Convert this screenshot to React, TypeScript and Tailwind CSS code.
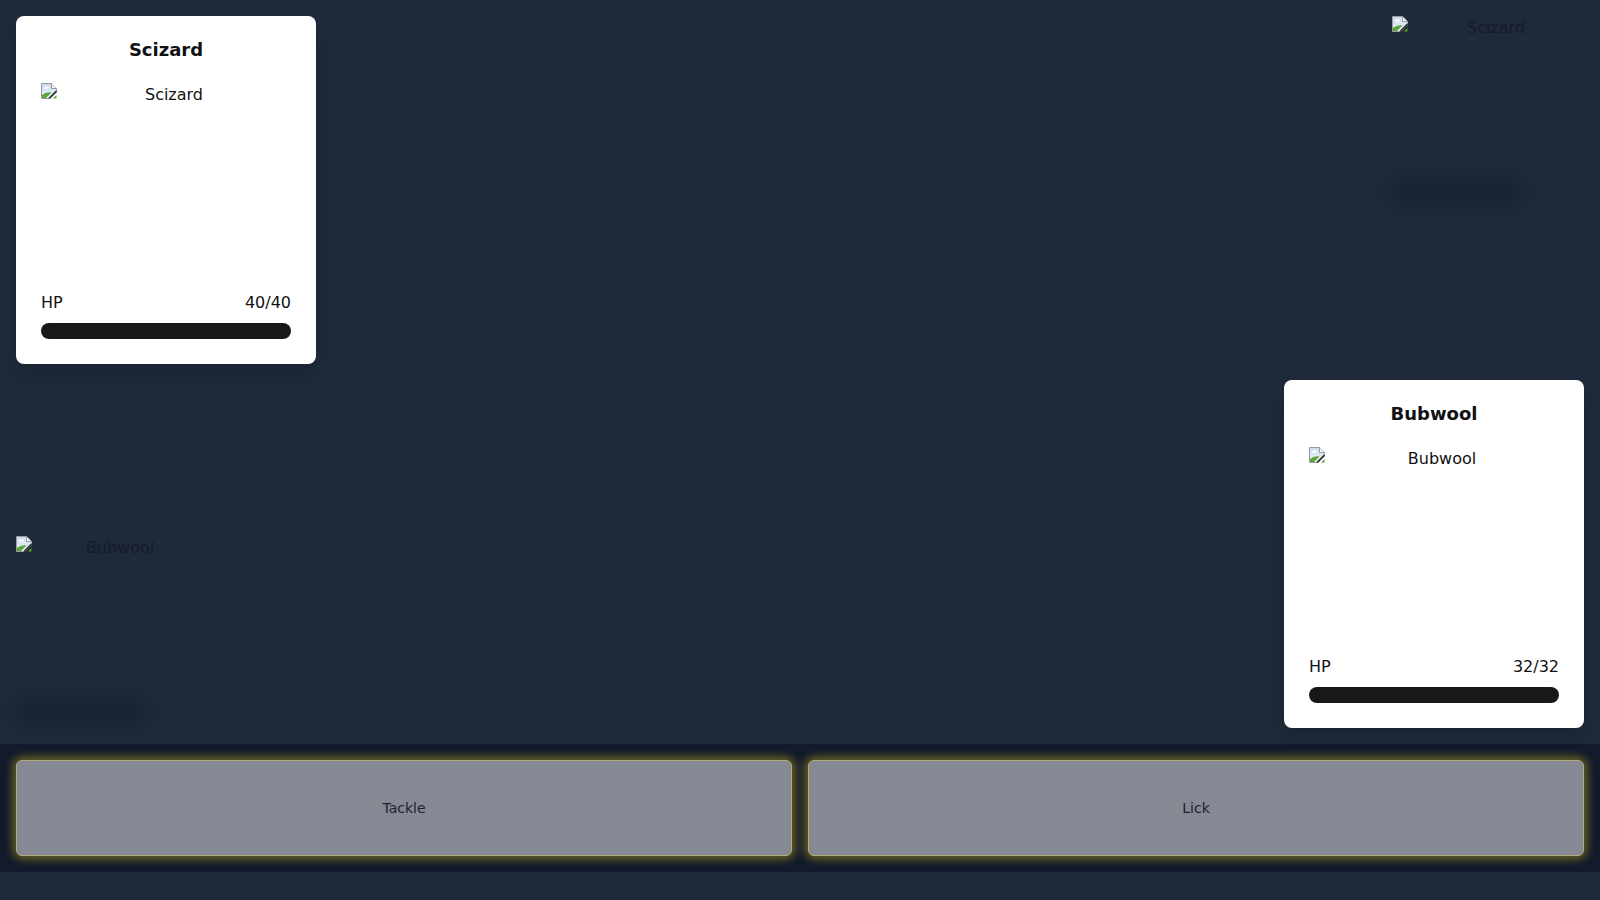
import React from "react";

function BrokenIcon() {
  return (
    <svg width="16" height="16" viewBox="0 0 16 16" className="shrink-0">
      <defs>
        <linearGradient id="sky" x1="0" y1="0" x2="0" y2="1">
          <stop offset="0" stopColor="#c9dcf2" />
          <stop offset="1" stopColor="#eef4fb" />
        </linearGradient>
      </defs>
      <path d="M0.5 0.5 H10.5 L15.5 5.5 V9 L9 15.5 H0.5 Z" fill="url(#sky)" stroke="#9a9a9a" />
      <path d="M10.5 0.5 V5.5 H15.5" fill="#f4f4f4" stroke="#9a9a9a" />
      <ellipse cx="5.5" cy="4.6" rx="2.4" ry="1.2" fill="#ffffff" />
      <path d="M1 15 V12 Q5 8.5 10.5 9.5 L5 15 Z" fill="#5aa83a" />
      <path d="M8 15.5 L15.5 8" stroke="#2b2b2b" strokeWidth="1.6" />
      <path d="M12 15.5 L15.5 12 V15.5 Z" fill="#5aa83a" />
    </svg>
  );
}

function ImgBox({ name, dark }: { name: string; dark?: boolean }) {
  return (
    <div className="flex items-start w-full h-48">
      <BrokenIcon />
      <div
        className={
          "flex-1 text-center text-base leading-6 " +
          (dark ? "text-[#151b2a]" : "text-[#111111]")
        }
      >
        {name}
      </div>
    </div>
  );
}

function Sprite({ name }: { name: string }) {
  return (
    <div className="relative w-48 h-48">
      <ImgBox name={name} dark />
      <div className="absolute left-0 bottom-2 w-32 h-4 rounded-full bg-black/25 blur-sm" />
    </div>
  );
}

function Card({ name, hp }: { name: string; hp: string }) {
  return (
    <div className="w-[300px] bg-white rounded-lg px-[25px] pt-6 pb-[25px] shadow-lg">
      <h2 className="text-[18px] leading-[19px] font-bold text-center text-[#111111] mb-6">
        {name}
      </h2>
      <ImgBox name={name} />
      <div className="flex justify-between mt-4 text-base leading-6 text-[#111111]">
        <span>HP</span>
        <span>{hp}</span>
      </div>
      <div className="mt-2 h-4 w-full rounded-full bg-[#181818]" />
    </div>
  );
}

export default function App() {
  return (
    <div className="min-h-screen w-full bg-[#1e2939] font-['DejaVu_Sans',sans-serif]">
      <div className="h-[744px] p-4 flex flex-col justify-between">
        <div className="flex justify-between items-start">
          <Card name="Scizard" hp="40/40" />
          <Sprite name="Scizard" />
        </div>
        <div className="flex justify-between items-end">
          <Sprite name="Bubwool" />
          <Card name="Bubwool" hp="32/32" />
        </div>
      </div>
      <div className="bg-[#121a2c] p-4 grid grid-cols-2 gap-4">
        {["Tackle", "Lick"].map((m) => (
          <button
            key={m}
            className="h-24 rounded-md bg-[#858994] border border-[#b1ab74] text-sm text-[#1c2130] shadow-[0_0_10px_3px_rgba(185,165,30,0.55)]"
          >
            {m}
          </button>
        ))}
      </div>
    </div>
  );
}
